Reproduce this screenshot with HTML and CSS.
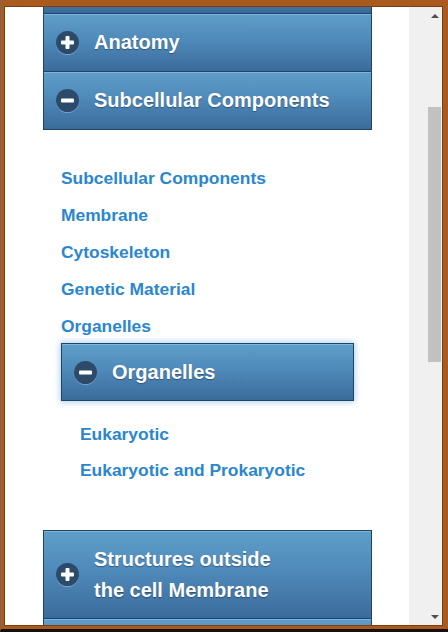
FILE: index.html
```html
<!DOCTYPE html>
<html>
<head>
<meta charset="utf-8">
<link rel="stylesheet" href="styles.css">
</head>
<body>
<div class="frame">
  <div class="window">
    <div class="content">
      <div class="panel">
        <div class="hdr partial"></div>
        <div class="hdr">
          <svg class="ico" viewBox="0 0 23 23"><circle cx="11.5" cy="11.5" r="11.5" fill="#2c4a69"/><rect x="5" y="9.5" width="13" height="4" rx="1" fill="#fff"/><rect x="9.5" y="5" width="4" height="13" rx="1" fill="#fff"/></svg>
          <span class="ttl">Anatomy</span>
        </div>
        <div class="hdr">
          <svg class="ico" viewBox="0 0 23 23"><circle cx="11.5" cy="11.5" r="11.5" fill="#2c4a69"/><rect x="5" y="9.5" width="13" height="4" rx="1" fill="#fff"/></svg>
          <span class="ttl">Subcellular Components</span>
        </div>
      </div>

      <ul class="links">
        <li><a href="#">Subcellular Components</a></li>
        <li><a href="#">Membrane</a></li>
        <li><a href="#">Cytoskeleton</a></li>
        <li><a href="#">Genetic Material</a></li>
        <li><a href="#">Organelles</a></li>
      </ul>

      <div class="subpanel">
        <div class="hdr sub">
          <svg class="ico" viewBox="0 0 23 23"><circle cx="11.5" cy="11.5" r="11.5" fill="#2c4a69"/><rect x="5" y="9.5" width="13" height="4" rx="1" fill="#fff"/></svg>
          <span class="ttl">Organelles</span>
        </div>
      </div>

      <ul class="links sublinks">
        <li><a href="#">Eukaryotic</a></li>
        <li><a href="#">Eukaryotic and Prokaryotic</a></li>
      </ul>

      <div class="panel bottom">
        <div class="hdr tall">
          <svg class="ico" viewBox="0 0 23 23"><circle cx="11.5" cy="11.5" r="11.5" fill="#2c4a69"/><rect x="5" y="9.5" width="13" height="4" rx="1" fill="#fff"/><rect x="9.5" y="5" width="4" height="13" rx="1" fill="#fff"/></svg>
          <span class="ttl">Structures outside<br>the cell Membrane</span>
        </div>
        <div class="hdr"></div>
      </div>
    </div>
    <div class="scrollbar">
      <div class="arrow up"></div>
      <div class="thumb"></div>
      <div class="arrow down"></div>
    </div>
  </div>
</div>
</body>
</html>
```

FILE: styles.css
```css
html, body {
  margin: 0;
  padding: 0;
  background: #ffffff;
}

body {
  font-family: "Liberation Sans", Arial, sans-serif;
}

.frame {
  box-sizing: border-box;
  width: 448px;
  height: 632px;
  background: #a95b1f;
  border-left: 1px solid #7d6552;
  border-bottom: 3px solid #161008;
  padding: 6px 5px 3px 3px;
}

.window {
  box-sizing: border-box;
  height: 100%;
  border: 1px solid #7b3e10;
  background: #ffffff;
  display: flex;
}

.content {
  flex: 1;
  min-width: 0;
  overflow: hidden;
}

/* Accordion panels */
.panel {
  box-sizing: border-box;
  width: 329px;
  margin-left: 38px;
  border-left: 1px solid #1c4567;
  border-right: 1px solid #1c4567;
  border-bottom: 1px solid #1c4567;
}

.hdr {
  display: flex;
  align-items: center;
  height: 57px;
  padding-left: 12px;
  border-top: 1px solid #1c4567;
  background: linear-gradient(to bottom, #5f9ec9 0%, #4f8aba 45%, #3b6b9b 100%);
  box-shadow: inset 0 1px 0 rgba(150, 200, 235, 0.55);
}

.hdr.partial {
  height: 6px;
  border-top: none;
  box-shadow: none;
  background: linear-gradient(to bottom, #3f71a1, #3a6999);
}

.hdr.tall {
  height: 87px;
}

.ico {
  flex: none;
  width: 23px;
  height: 23px;
  margin-right: 15px;
  filter: drop-shadow(0 1px 0 rgba(170, 205, 230, 0.45));
}

.ttl {
  color: #ffffff;
  font-size: 20px;
  font-weight: bold;
  line-height: 31px;
  text-shadow: 0 1px 1px rgba(10, 30, 55, 0.45);
}

/* Link lists */
.links {
  list-style: none;
  margin: 30px 0 0 56px;
  padding: 0;
}

.links li a {
  display: block;
  height: 37px;
  line-height: 37px;
  font-size: 17.4px;
  font-weight: bold;
  color: #2a86cf;
  text-decoration: none;
  white-space: nowrap;
}

.sublinks {
  margin: 15px 0 0 75px;
}

.sublinks li a {
  height: 36px;
  line-height: 36px;
}

/* Nested sub panel */
.subpanel {
  box-sizing: border-box;
  width: 293px;
  margin: -2px 0 0 56px;
  border: 1px solid #1c4567;
  box-shadow: 0 0 6px 1px rgba(80, 145, 210, 0.45);
}

.hdr.sub {
  height: 56px;
  border-top: none;
}

.panel.bottom {
  margin-top: 42px;
}

/* Scrollbar */
.scrollbar {
  flex: none;
  width: 33px;
  box-sizing: border-box;
  padding-right: 1px;
  background: #f0f0f0;
  display: flex;
  flex-direction: column;
  align-items: flex-end;
}

.arrow {
  width: 0;
  height: 0;
  border-left: 4px solid transparent;
  border-right: 4px solid transparent;
  margin-right: 2px;
}

.arrow.up {
  margin-top: 7px;
  border-bottom: 4px solid #505050;
}

.arrow.down {
  margin-top: auto;
  margin-bottom: 6px;
  border-top: 4px solid #505050;
}

.thumb {
  width: 13px;
  height: 255px;
  margin-top: 89px;
  background: #c1c1c1;
}
```
